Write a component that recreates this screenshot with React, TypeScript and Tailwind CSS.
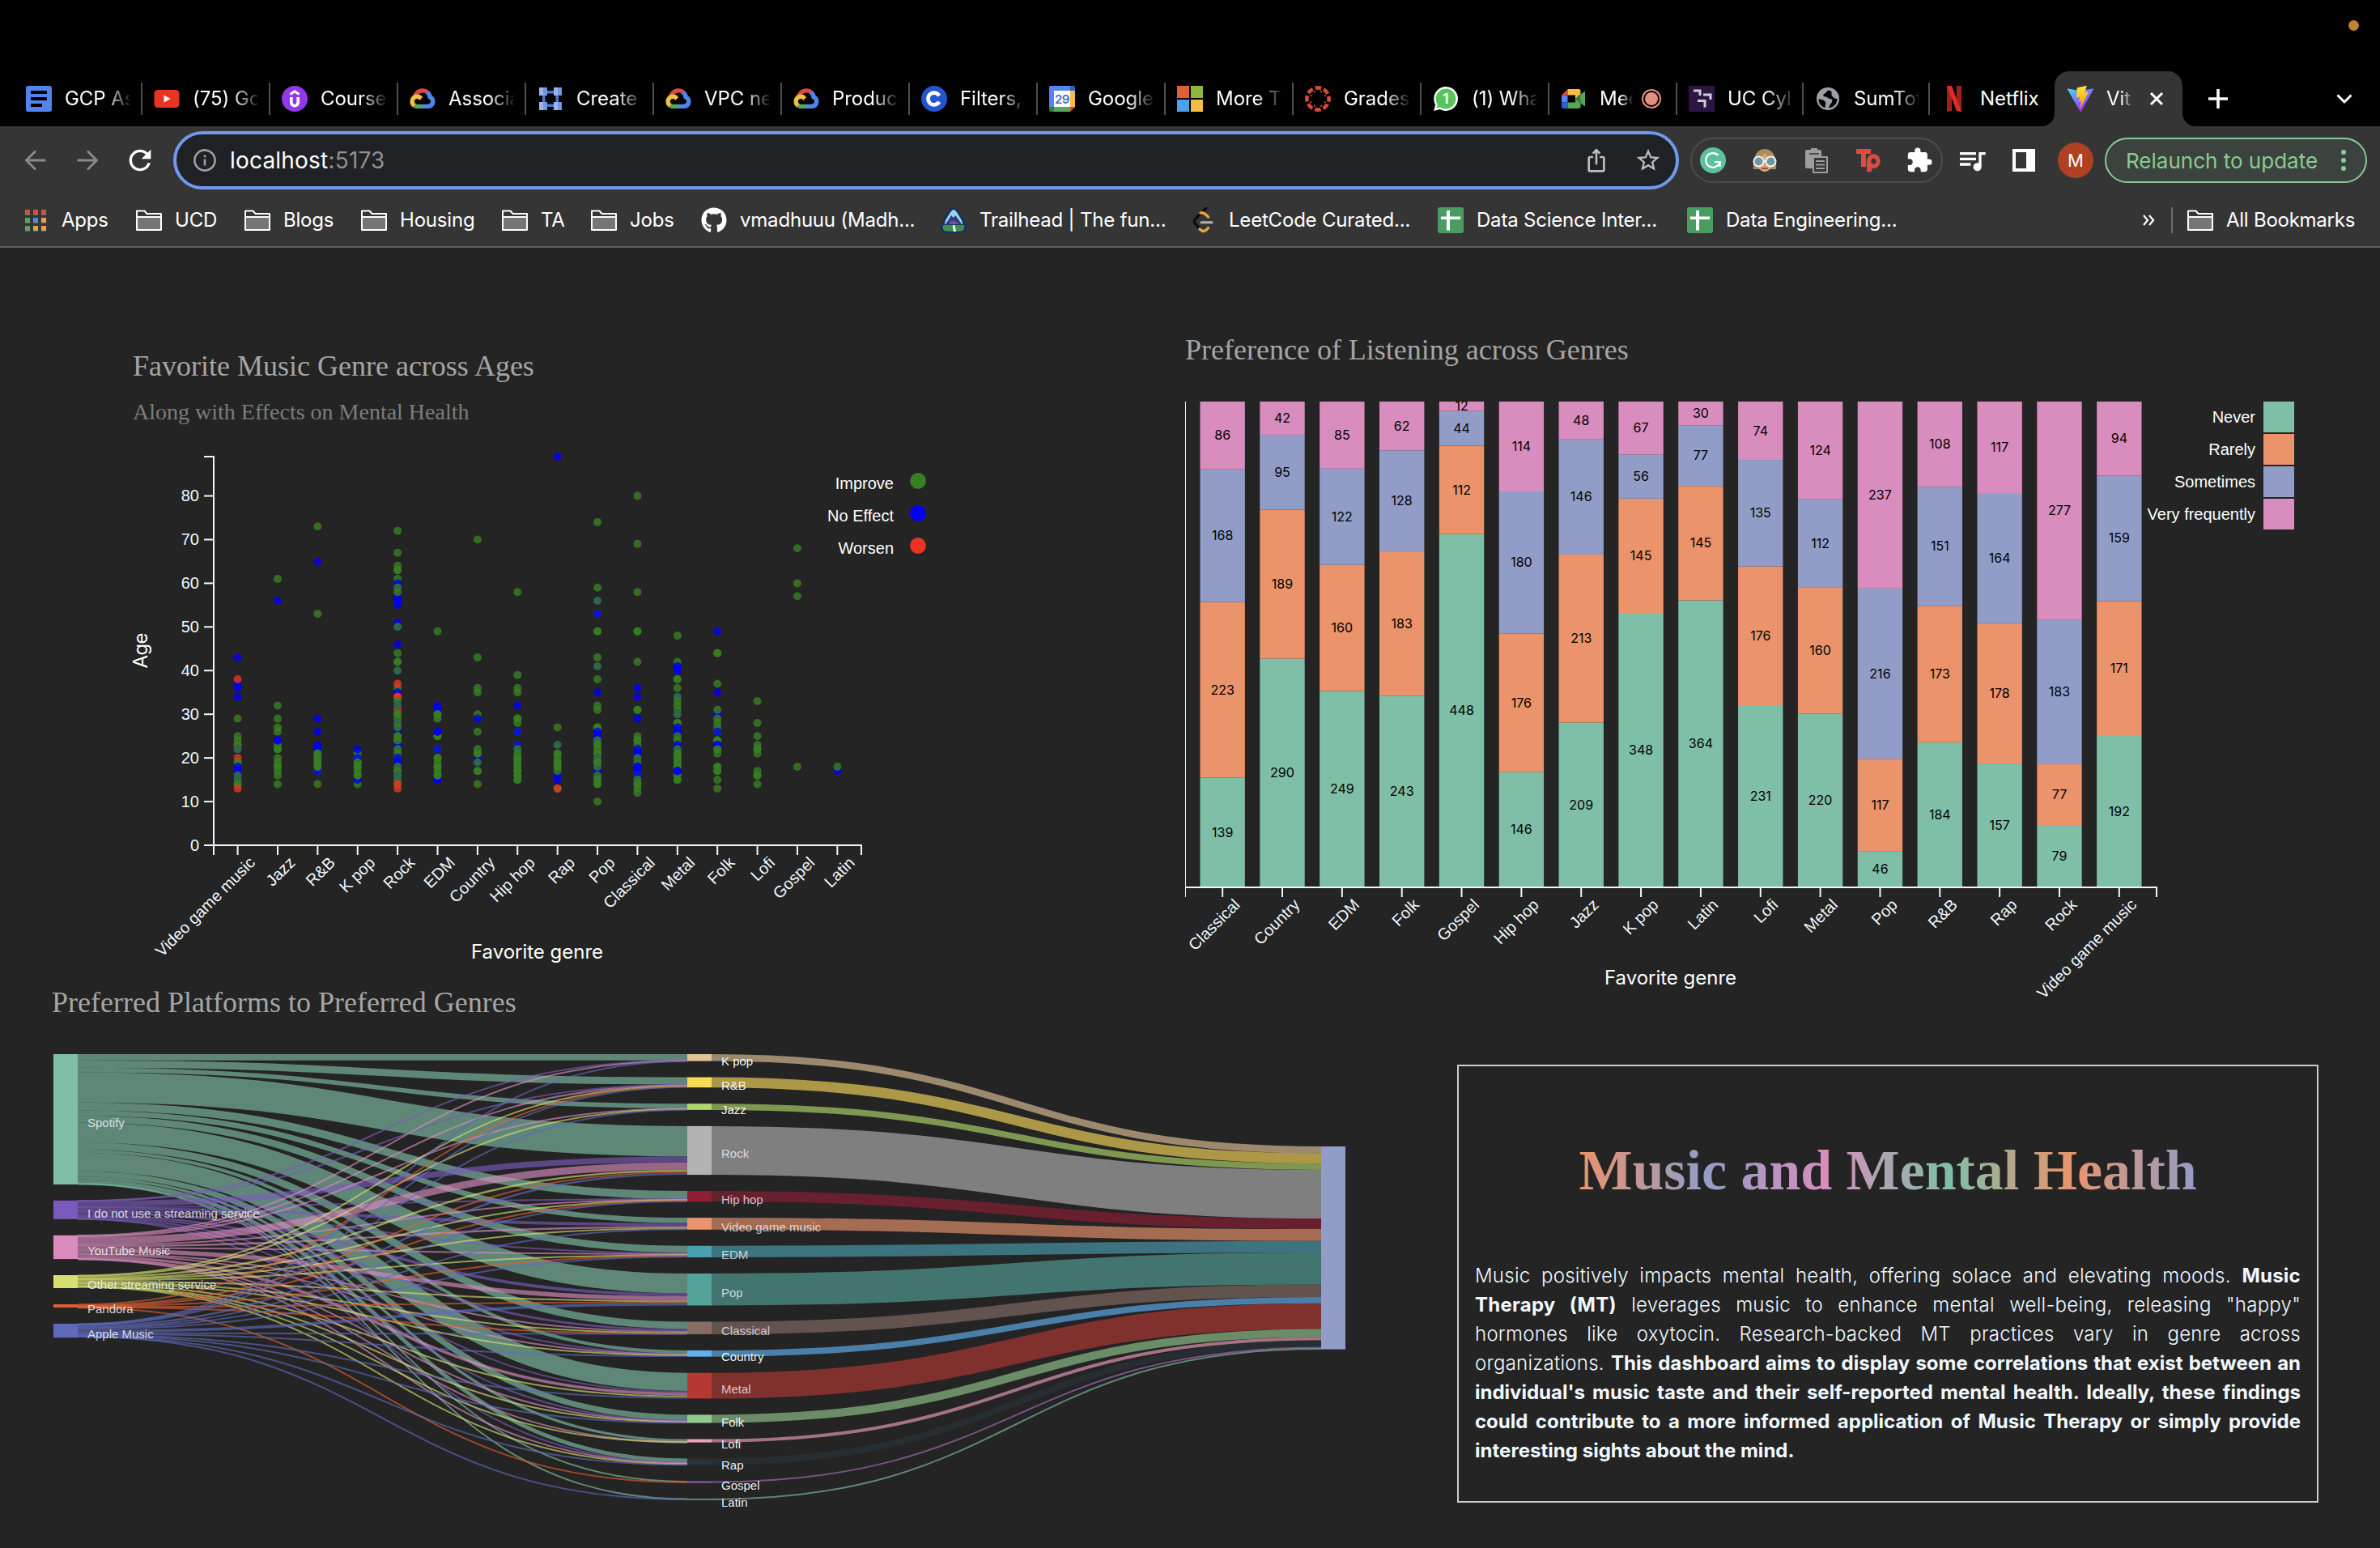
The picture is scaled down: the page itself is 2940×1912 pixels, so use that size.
import React from "react";
import { FaGithub } from "react-icons/fa";
import { MdExtension, MdQueueMusic, MdStarOutline, MdIosShare, MdRefresh } from "react-icons/md";

/* ---------- icons ---------- */

const box = "h-8 w-8 shrink-0";

const DocsIcon = () => (
  <svg className={box} viewBox="0 0 32 32">
    <rect width="32" height="32" rx="3" fill="#5383ec" />
    <path d="M6 6h20v4H6zM6 14h20v4H6zM6 22h14v4H6z" fill="#000" />
  </svg>
);
const YoutubeIcon = () => (
  <svg className={box} viewBox="0 0 32 32">
    <rect x=".5" y="5" width="31" height="22" rx="4.5" fill="#ea3323" />
    <path d="M12.5 11.5v9l8-4.5z" fill="#fff" />
  </svg>
);
const UdemyIcon = () => (
  <svg className={box} viewBox="0 0 32 32">
    <circle cx="16" cy="16" r="16" fill="#9338e8" />
    <path d="M10.500 10.500L16 6.800l5.500 3.700" fill="none" stroke="#fff" strokeWidth="3" />
    <path d="M11.800 14v6.500a4.200 4.200 0 0 0 8.400 0V14" fill="none" stroke="#fff" strokeWidth="3.600" />
  </svg>
);
const GcpIcon = () => (
  <svg className={box} viewBox="-4 -26 264 264">
    <path fill="#dc4c3c" d="M170.252 56.819l22.253-22.253 1.483-9.37C153.437-11.677 88.976-7.496 52.42 33.92 42.267 45.423 34.734 59.764 30.717 74.573l7.97-1.123 44.505-7.34 3.436-3.513c19.797-21.742 53.27-24.667 76.128-6.168l7.496.39z" />
    <path fill="#5383ec" d="M224.205 73.918a100.249 100.249 0 00-30.217-48.722l-31.232 31.232a55.515 55.515 0 0120.379 44.037v5.544c15.35 0 27.797 12.445 27.797 27.796 0 15.352-12.446 27.485-27.797 27.485h-55.671l-5.466 5.934v33.34l5.466 5.231h55.67c39.93.311 72.553-31.494 72.864-71.424a72.303 72.303 0 00-31.793-60.453" />
    <path fill="#58a55c" d="M71.87 205.796h55.593V161.29H71.87a27.275 27.275 0 01-11.4-2.498l-7.887 2.42-22.409 22.253-1.952 7.574c12.567 9.489 27.9 14.825 43.647 14.757" />
    <path fill="#f1bf42" d="M71.87 61.425C31.94 61.664-.237 94.228.001 134.158a72.301 72.301 0 0028.222 56.88l32.248-32.246c-13.99-6.322-20.208-22.786-13.887-36.776 6.32-13.99 22.786-20.208 36.775-13.888a27.796 27.796 0 0113.887 13.888l32.248-32.248A72.224 72.224 0 0071.87 61.425" />
  </svg>
);
const NetworkIcon = () => (
  <svg className={box} viewBox="0 0 32 32">
    <path d="M12 6h8v3.500h-8zM12 22.500h8V26h-8zM6 12h3.500v8H6zM22.500 12H26v8h-3.500z" fill="#4d72d6" />
    <path d="M2 2h5v10H2zM20 2h5v10h-5zM2 20h5v10H2zM20 20h5v10h-5z" fill="#9bb3f0" />
    <path d="M7 2h5v10H7zM25 2h5v10h-5zM7 20h5v10H7zM25 20h5v10h-5z" fill="#7494e6" />
  </svg>
);
const CourseraIcon = () => (
  <svg className={box} viewBox="0 0 32 32">
    <circle cx="16" cy="16" r="16" fill="#2255cf" />
    <path d="M22.200 12.200a7.400 7.400 0 1 0 0 7.600" fill="none" stroke="#fff" strokeWidth="4.600" />
  </svg>
);
const CalendarIcon = () => (
  <svg className={box} viewBox="0 0 32 32">
    <path d="M2 0h24v6H6v20H0V2a2 2 0 0 1 2-2z" fill="#5383ec" />
    <path d="M26 0h4a2 2 0 0 1 2 2v4h-6z" fill="#2f62c9" />
    <path d="M26 6h6v20h-6z" fill="#f1bf42" />
    <path d="M6 26h20v6H6z" fill="#58a55c" />
    <path d="M0 26h6v6H2a2 2 0 0 1-2-2z" fill="#387b3e" />
    <path d="M26 26h6l-6 6z" fill="#dc4c3c" />
    <path d="M6 6h20v20H6z" fill="#fff" />
    <text x="16" y="21.500" textAnchor="middle" fontFamily="Inter, sans-serif" fontWeight="600" fontSize="15" letterSpacing="-.5" fill="#3a6bd6">29</text>
  </svg>
);
const MicrosoftIcon = () => (
  <svg className={box} viewBox="0 0 32 32">
    <path d="M0 0h15v15H0z" fill="#e15f38" />
    <path d="M17 0h15v15H17z" fill="#8bba3a" />
    <path d="M0 17h15v15H0z" fill="#4ba1ea" />
    <path d="M17 17h15v15H17z" fill="#f5bd42" />
  </svg>
);
const CanvasIcon = () => (
  <svg className={box} viewBox="0 0 32 32">
    <circle cx="16" cy="16" r="13.600" fill="none" stroke="#d14e36" strokeWidth="4.600" strokeDasharray="7.480 3.200" strokeDashoffset="3.740" />
    <g fill="#d14e36">
      <circle cx="20" cy="7.200" r="1.100" /><circle cx="12" cy="7.200" r="1.100" />
      <circle cx="20" cy="24.800" r="1.100" /><circle cx="12" cy="24.800" r="1.100" />
      <circle cx="7.200" cy="12" r="1.100" /><circle cx="7.200" cy="20" r="1.100" />
      <circle cx="24.800" cy="12" r="1.100" /><circle cx="24.800" cy="20" r="1.100" />
    </g>
  </svg>
);
const WhatsappIcon = () => (
  <svg className={box} viewBox="0 0 32 32">
    <path d="M16 1a15 15 0 1 1-7.500 28L1 31l2.200-7.500A15 15 0 0 1 16 1z" fill="#fff" />
    <circle cx="16" cy="16" r="12.400" fill="#5ac45c" />
    <path d="M4.500 27.500l1.600-6 4.300 4.400z" fill="#5ac45c" />
    <text x="15.800" y="22" textAnchor="middle" fontFamily="Inter, sans-serif" fontWeight="700" fontSize="17" fill="#fff">1</text>
  </svg>
);
const MeetIcon = () => (
  <svg className={box} viewBox="0 0 32 32">
    <path d="M1 11.500L8.500 4v7.500z" fill="#dc4c3c" />
    <path d="M8.500 4H22a2.500 2.500 0 0 1 2.500 2.500V16L18 18.500V11.500H8.500z" fill="#f1bf42" />
    <path d="M1 11.500h7.500v9H1z" fill="#5383ec" />
    <path d="M1 20.500h7.500V28H3.500A2.500 2.500 0 0 1 1 25.500z" fill="#2f62c9" />
    <path d="M8.500 20.500H18V16l6.500-5v14.500A2.500 2.500 0 0 1 22 28H8.500z" fill="#58a55c" />
    <path d="M18 16l6.500-6.500v13z" fill="#387b3e" />
    <path d="M24.500 10.500L30 6.500v19l-5.500-4z" fill="#58a55c" />
  </svg>
);
const CylanceIcon = () => (
  <svg className={box} viewBox="0 0 32 32">
    <path d="M0 0h32v32H0z" fill="#2a1543" />
    <path d="M6 6h8v6M18 11h9v6M11 18.500h9v8" fill="none" stroke="#cfcfcf" strokeWidth="3" />
  </svg>
);
const GlobeIcon = () => (
  <svg className={box} viewBox="0 0 32 32">
    <circle cx="16" cy="16" r="14" fill="#9aa0a6" />
    <path d="M17 5.500c-3 1-3 3.500-5.500 4.500s-1 3.500 1.500 3.500 3 2.500 6 2.500 3 4 1 5.500-1.500 4-3.500 5.500c6 .5 10.500-4 11-10.500-1-1-3.500-.5-4.500-2s-2.500-1.500-2.500-4 1-4-3.500-5z" fill="#000" />
    <path d="M4.500 16.500c2 0 5 .5 7 2s2 3 1.500 4.500l-.500 4c-5-1.500-8-5.500-8-10.500z" fill="#000" />
  </svg>
);
const NetflixIcon = () => (
  <svg className={box} viewBox="0 0 32 32">
    <path d="M7 0h6v31l-6 1zM19 0h6v32l-6-1z" fill="#a0201c" />
    <path d="M7 0h6l12 32-6-1z" fill="#d92e24" />
  </svg>
);
const ViteIcon = () => (
  <svg className={box} viewBox="0 0 256 257">
    <defs>
      <linearGradient id="va" x1="0" x2=".57" y1=".08" y2=".9"><stop stopColor="#41d1ff" /><stop offset="1" stopColor="#a636fe" /></linearGradient>
      <linearGradient id="vb" x1=".43" x2=".5" y1=".02" y2=".9"><stop stopColor="#ffea83" /><stop offset=".08" stopColor="#ffdd35" /><stop offset="1" stopColor="#ffa800" /></linearGradient>
    </defs>
    <path fill="url(#va)" d="M255.153 37.938L134.897 252.976c-2.483 4.44-8.862 4.466-11.382.048L.875 37.958c-2.746-4.814 1.371-10.646 6.827-9.67l120.385 21.517a6.537 6.537 0 0 0 2.322-.004l117.867-21.483c5.438-.991 9.574 4.796 6.877 9.62Z" />
    <path fill="url(#vb)" d="M185.432.063L96.44 17.501a3.268 3.268 0 0 0-2.634 3.014l-5.474 92.456a3.268 3.268 0 0 0 3.997 3.378l24.777-5.718c2.318-.535 4.413 1.507 3.936 3.838l-7.361 36.047c-.495 2.426 1.782 4.5 4.151 3.78l15.304-4.649c2.372-.72 4.652 1.36 4.15 3.788l-11.698 56.621c-.732 3.542 3.979 5.473 5.943 2.437l1.313-2.028l72.516-144.72c1.215-2.423-.88-5.186-3.54-4.672l-25.505 4.922c-2.396.462-4.435-1.77-3.759-4.114l16.646-57.705c.677-2.35-1.37-4.583-3.769-4.113Z" />
  </svg>
);

const FolderIcon = () => (
  <svg className={box} viewBox="0 0 32 32">
    <path d="M1 28V4.500h9.500l3 3.500H31v20z" fill="#353535" stroke="#fff" strokeWidth="2" strokeLinejoin="round" />
    <path d="M2 13h28v14H2z" fill="#757575" />
    <path d="M2 12h28" stroke="#fff" strokeWidth="2" />
  </svg>
);
const AppsIcon = () => (
  <svg className={box} viewBox="0 0 32 32">
    {["#dc4c3c", "#dc4c3c", "#dc4c3c", "#58a55c", "#5383ec", "#e8a33d", "#58a55c", "#e8a33d", "#e8a33d"].map((c, i) => (
      <g key={i}>
        <rect x={3 + (i % 3) * 10} y={3 + Math.floor(i / 3) * 10} width="6" height="6" fill={c} />
        <rect x={3 + (i % 3) * 10} y={8.500 + Math.floor(i / 3) * 10} width="6" height="1" fill="#8c8c8c" />
      </g>
    ))}
  </svg>
);
const TrailheadIcon = () => (
  <svg className={box} viewBox="0 0 32 32">
    <path d="M16 0c3 0 6 4 9 9s7 12 7 16-3 6-6 6.500-16 .5-20 0S0 29 0 25 4 14 7 9s6-9 9-9z" fill="#16325c" />
    <path d="M16 3c2 0 4 3 7 8s4 7 4 10H5c0-3 1-5 4-10s5-8 7-8z" fill="#9bd4f5" />
    <path d="M6 21l4-6 3-5 3 3 2-3 4 5 4 6z" fill="#2b3d78" />
    <path d="M10 21l2-5 2 2 2-3 3 4 2-1 1 3z" fill="#7c4a9e" />
    <path d="M3 22h26c1 4-1 7-4 7.500s-14 .5-18 0S2 26 3 22z" fill="#3f8f4d" />
    <path d="M15 22h2l1 3 1 5h-3l-1-5z" fill="#fff" />
  </svg>
);
const LeetcodeIcon = () => (
  <svg className={box} viewBox="0 0 32 32">
    <path d="M20 1L7 14c-2 2-2 5 0 7l6 7" fill="none" stroke="#0d0d0d" strokeWidth="3.400" strokeLinecap="round" />
    <path d="M13 7c3-1 6 1 9.500 5M12 27c4 4 7 3 10.500-1.500" fill="none" stroke="#eba340" strokeWidth="3.400" strokeLinecap="round" />
    <path d="M14 18.800h13" stroke="#b3b3b3" strokeWidth="3" strokeLinecap="round" />
  </svg>
);
const SheetsIcon = () => (
  <svg className={box} viewBox="0 0 32 32">
    <rect width="32" height="32" rx="3" fill="#4a9d61" />
    <path d="M11 4h4v7.500h13v3.500H15v13.500h-4V15H4v-3.500h7z" fill="#fff" />
  </svg>
);

/* ---------- browser chrome ---------- */

type Tab = { icon: React.ReactNode; title: string; w?: string; rec?: boolean; full?: boolean };
const tabs: Tab[] = [
  { icon: <DocsIcon />, title: "GCP As" },
  { icon: <YoutubeIcon />, title: "(75) Go" },
  { icon: <UdemyIcon />, title: "Course" },
  { icon: <GcpIcon />, title: "Associa" },
  { icon: <NetworkIcon />, title: "Create" },
  { icon: <GcpIcon />, title: "VPC ne" },
  { icon: <GcpIcon />, title: "Produc" },
  { icon: <CourseraIcon />, title: "Filters," },
  { icon: <CalendarIcon />, title: "Google" },
  { icon: <MicrosoftIcon />, title: "More T" },
  { icon: <CanvasIcon />, title: "Grades" },
  { icon: <WhatsappIcon />, title: "(1) Wha" },
  { icon: <MeetIcon />, title: "Mee", rec: true },
  { icon: <CylanceIcon />, title: "UC Cyl", w: "w-[156px]" },
  { icon: <GlobeIcon />, title: "SumTot", w: "w-[156px]" },
  { icon: <NetflixIcon />, title: "Netflix", w: "w-[156px]", full: true },
];

function TabStrip() {
  return (
    <div className="flex h-[68px] items-center pl-4 text-[24px] leading-8 tracking-[-0.05px] text-white">
      {tabs.map((t, i) => (
        <div key={i} className={`flex h-10 shrink-0 items-center border-l-2 pl-3.5 ${i === 0 ? "border-transparent" : "border-[#4f4f4f]"} ${t.w ?? "w-[158px]"}`}>
          {t.icon}
          <span
            className={`ml-4 overflow-hidden whitespace-nowrap ${t.rec ? "w-[40px]" : "w-[80px]"} ${
              t.full ? "" : "[mask-image:linear-gradient(to_right,#000_62%,transparent_105%)]"
            }`}
          >
            {t.title}
          </span>
          {t.rec && (
            <svg className="ml-3 h-6 w-6 shrink-0" viewBox="0 0 24 24">
              <circle cx="12" cy="12" r="11" fill="none" stroke="#e38f84" strokeWidth="2" />
              <circle cx="12" cy="12" r="8" fill="#e38f84" />
            </svg>
          )}
        </div>
      ))}
      <div className="relative flex h-[68px] w-[158px] shrink-0 items-center rounded-t-[18px] bg-[#353535] pl-4">
        <svg className="absolute bottom-0 left-[-16px] h-4 w-4" viewBox="0 0 16 16"><path d="M16 0v16H0A16 16 0 0 0 16 0z" fill="#353535" /></svg>
        <svg className="absolute bottom-0 right-[-16px] h-4 w-4" viewBox="0 0 16 16"><path d="M0 0v16h16A16 16 0 0 1 0 0z" fill="#353535" /></svg>
        <ViteIcon />
        <span className="ml-4 w-[32px] overflow-hidden whitespace-nowrap [mask-image:linear-gradient(to_right,#000_55%,transparent_110%)]">Vit</span>
        <svg className="ml-5 h-5 w-5" viewBox="0 0 20 20"><path d="M3 3l14 14M17 3L3 17" stroke="#fff" strokeWidth="3" /></svg>
      </div>
      <svg className="ml-8 h-6 w-6" viewBox="0 0 24 24"><path d="M12 1v22M1 12h22" stroke="#fff" strokeWidth="3.600" strokeLinecap="round" /></svg>
      <svg className="ml-[134px] h-5 w-5" viewBox="0 0 20 20"><path d="M1.500 5.500l8.500 8.500 8.500-8.500" fill="none" stroke="#fff" strokeWidth="3" /></svg>
    </div>
  );
}

const slot = "flex h-8 w-16 shrink-0 items-center justify-center";

function Toolbar() {
  return (
    <div className="flex h-[84px] items-center bg-[#353535] pl-3">
      <div className={slot}>
        <svg className="h-7 w-7" viewBox="0 0 28 28"><path d="M26.500 14H3M14 2.500L2.500 14 14 25.500" fill="none" stroke="#8a8a8a" strokeWidth="2.800" /></svg>
      </div>
      <div className={slot}>
        <svg className="h-7 w-7" viewBox="0 0 28 28"><path d="M1.500 14H25M14 2.500L25.500 14 14 25.500" fill="none" stroke="#8a8a8a" strokeWidth="2.800" /></svg>
      </div>
      <div className={slot}><MdRefresh className="ml-[1px] h-10 w-10 text-white" /></div>
      <div className="ml-[10px] flex h-[72px] w-[1860px] shrink-0 items-center rounded-full border-4 border-[#7099ec] bg-[#202124] pl-[21px]">
        <svg className="h-7 w-7" viewBox="0 0 28 28">
          <circle cx="14" cy="14" r="12.600" fill="none" stroke="#9aa0a6" strokeWidth="2.600" />
          <path d="M12.700 12.500h2.600v8h-2.600zM12.700 7.500h2.600v2.800h-2.600z" fill="#9aa0a6" />
        </svg>
        <span className="ml-[17px] text-[28px] leading-9 tracking-[0.2px] text-white">
          localhost<span className="text-[#8f9092]">:5173</span>
        </span>
        <MdIosShare className="ml-auto h-8 w-8 text-[#bdbdbd]" />
        <MdStarOutline className="ml-[31px] mr-[17px] h-[34px] w-[34px] text-[#bdbdbd]" />
      </div>
      <div className="ml-[14px] flex h-14 w-[312px] shrink-0 items-center rounded-full border-2 border-[#4c4c4c] pl-[10px]">
        <svg className={box} viewBox="0 0 32 32">
          <circle cx="16" cy="16" r="16" fill="#5cc19d" />
          <path d="M22.500 10A8.800 8.800 0 1 0 24.500 18H18" fill="none" stroke="#fff" strokeWidth="2.200" />
          <path d="M24.500 17.500v6.500" stroke="#fff" strokeWidth="2.400" />
        </svg>
        <svg className="ml-8 h-8 w-8 shrink-0" viewBox="0 0 32 32">
          <path d="M2 27C1 14 5 2 16 2s15 12 14 25z" fill="#a98d62" />
          <path d="M5 15c4-1 8-4 11-8 3 4 7 7 11 8 0 8-5 15-11 15S5 23 5 15z" fill="#d9a27c" />
          <circle cx="8.500" cy="17.500" r="6" fill="#6d97a3" stroke="#f2f2f2" strokeWidth="2" />
          <circle cx="23.500" cy="17.500" r="6" fill="#6d97a3" stroke="#f2f2f2" strokeWidth="2" />
          <path d="M14 17h4" stroke="#f2f2f2" strokeWidth="2" />
          <path d="M12 26h8" stroke="#a8503c" strokeWidth="2" />
        </svg>
        <svg className="ml-8 h-8 w-8 shrink-0" viewBox="0 0 32 32">
          <path d="M2 5a2 2 0 0 1 2-2h5V1h8v2h3a2 2 0 0 1 2 2v6H11v15H4a2 2 0 0 1-2-2z" fill="#9d9d9d" />
          <path d="M7 8h12" stroke="#353535" strokeWidth="1.500" />
          <path d="M12 12h17v19H12z" fill="#353535" stroke="#9d9d9d" strokeWidth="2" strokeLinejoin="round" />
          <path d="M15 17h11M15 21.500h11M15 26h11" stroke="#9d9d9d" strokeWidth="1.800" />
        </svg>
        <svg className="ml-8 h-8 w-8 shrink-0" viewBox="0 0 32 32">
          <path d="M1 2h18v6h-6v16H7V8H1z" fill="#dd4c41" />
          <path d="M22.500 8a8.500 9 0 1 1-2.500 17.700V30h-6V17a8.500 9 0 0 1 8.500-9zm0 5.500a3.200 3.600 0 1 0 .100 0z" fill="#dd4c41" fillRule="evenodd" />
        </svg>
        <MdExtension className="ml-[30px] h-[34px] w-[34px] shrink-0 text-white" />
      </div>
      <MdQueueMusic className="ml-[16px] h-10 w-10 shrink-0 text-white" />
      <div className="ml-[30px] h-7 w-7 shrink-0 border-4 border-r-[11px] border-white" />
      <div className="ml-[28px] flex h-11 w-11 shrink-0 items-center justify-center rounded-full bg-[#ad4121] text-[22px] text-white">M</div>
      <div className="ml-[14px] flex h-14 w-[324px] shrink-0 items-center rounded-full border-2 border-[#8acb97] bg-[#3c423d] pl-[24px] text-[26px] text-[#8acb97]">
        <span className="whitespace-nowrap">Relaunch to update</span>
        <svg className="ml-auto mr-[24px] h-7 w-[6px]" viewBox="0 0 6 28">
          <circle cx="3" cy="4" r="3" fill="#8acb97" /><circle cx="3" cy="14" r="3" fill="#8acb97" /><circle cx="3" cy="24" r="3" fill="#8acb97" />
        </svg>
      </div>
    </div>
  );
}

const bookmarks: [React.ReactNode, string, string][] = [
  [<AppsIcon />, "Apps", "w-[140px]"],
  [<FolderIcon />, "UCD", "w-[134px]"],
  [<FolderIcon />, "Blogs", "w-[144px]"],
  [<FolderIcon />, "Housing", "w-[174px]"],
  [<FolderIcon />, "TA", "w-[110px]"],
  [<FolderIcon />, "Jobs", "w-[136px]"],
  [<FaGithub className="h-8 w-8 shrink-0 text-white" />, "vmadhuuu (Madh...", "w-[296px]"],
  [<TrailheadIcon />, "Trailhead | The fun...", "w-[308px]"],
  [<LeetcodeIcon />, "LeetCode Curated...", "w-[306px]"],
  [<SheetsIcon />, "Data Science Inter...", "w-[308px]"],
  [<SheetsIcon />, "Data Engineering...", "w-[300px]"],
];

function BookmarksBar() {
  return (
    <div className="flex h-[66px] items-center border-b-2 border-[#5f5f5f] bg-[#353535] pl-7 text-[24px] leading-8 text-white">
      {bookmarks.map(([icon, label, w], i) => (
        <div key={i} className={`flex shrink-0 items-center gap-4 whitespace-nowrap ${w}`}>
          {icon}
          <span className="tracking-[-0.2px]">{label}</span>
        </div>
      ))}
      <svg className="ml-[262px] h-4 w-4 shrink-0" viewBox="0 0 16 16"><path d="M2 2l5 6-5 6M9 2l5 6-5 6" fill="none" stroke="#fff" strokeWidth="2.200" /></svg>
      <div className="ml-[20px] h-8 w-[2px] shrink-0 bg-[#6b6b6b]" />
      <div className="ml-[18px] flex items-center gap-4 whitespace-nowrap">
        <FolderIcon />
        <span className="tracking-[-0.25px]">All Bookmarks</span>
      </div>
    </div>
  );
}

/* ---------- scatter plot ---------- */

const AX = "#f0f8ff";
const HELV = '"Liberation Sans", Arial, sans-serif';
const GREEN = "#378022";
const BLUE = "#0000f5";
const RED = "#eb3323";

const scatter: [string, string][] = [
  ["Video game music", "b43 b37 r38 b36 b34 g29 g25 r23 g24 g23 b22 g22 g19 r20 g19 b17 b18 b15 g15 b16 g16 g14 g14 r13"],
  ["Jazz", "g61 b56 g32 g29 g27 g26 g23 b24 b24 g22 g22 g20 g19 g18 g18 g17 g16 g14"],
  ["R&B", "g73 b65 g53 b29 b26 b23 b22 g21 g21 g20 g20 g19 g19 b17 g17 b17 g18 g18 g14"],
  ["K pop", "g21 b22 g19 g20 b20 g19 g18 g18 g17 g14 b15 g16 g16"],
  ["Rock", "g72 g67 g64 g63 g63 g61 b60 b57 b59 g59 g58 b56 b56 b55 b51 b50 g50 b46 g44 g42 g42 b40 g40 g36 r37 b35 r34 r34 g33 r31 b32 g32 g30 g29 b28 g28 b26 g27 g30 g25 g24 b23 g25 g21 g22 g24 b20 g20 b19 b20 g16 g17 b18 g18 g17 g15 b16 g16 r13 g14 r14"],
  ["EDM", "g49 b31 b32 b31 g29 g30 g30 g25 g25 b26 b26 g22 b22 g20 g20 g19 g18 g18 g17 b15 b15 g16 g16"],
  ["Country", "g70 g43 g36 g35 g30 b29 g26 g22 b20 g21 g21 b19 g19 g17 g17 g14"],
  ["Hip hop", "g58 g39 g36 g35 b32 g28 g29 g29 g26 b26 b22 g23 b23 g22 g21 g20 g20 g19 g19 g18 g18 g17 g17 g16 g16 g15 g15"],
  ["Rap", "b89 g27 b23 g23 g21 g21 g20 g19 g19 b16 b15 g17 g18 g18 g13 r13"],
  ["Pop", "g74 g59 b56 g56 g53 b53 g49 g49 g43 b41 g41 g38 b35 g32 g31 b26 g27 g27 b26 b25 g24 b24 g24 g23 g23 g22 r21 g21 g21 b20 g20 g19 b18 b17 g19 g18 b16 g16 g15 g15 g14 g14 g10"],
  ["Classical", "g80 g69 g58 g49 g49 g42 b36 b34 g31 g31 b29 g25 g24 g23 g24 b22 b21 b21 g20 b19 g19 b18 b18 b17 g16 b16 g15 g12 g13 g14 g14"],
  ["Metal", "g48 b41 g42 b41 b40 b40 g38 g38 g36 b34 g34 g33 g32 g31 b30 g30 g28 g28 b27 b26 b26 g25 g24 b23 b22 g22 g21 g21 g20 g20 g19 g19 g18 g18 g16 b17 b17 g15 g15"],
  ["Folk", "b49 g44 g44 g37 b35 b30 g31 g29 g28 g27 g26 b26 g24 g24 b23 g22 b23 g21 g22 g18 g18 g17 g17 g15 g13"],
  ["Lofi", "g33 g28 g25 g23 g22 g22 g21 g17 g16 g16 g14"],
  ["Gospel", "g68 g60 g57 g18"],
  ["Latin", "b17 g18"],
];

function TickLabel({ x, y, children }: { x: number; y: number; children: React.ReactNode }) {
  return (
    <text transform={`translate(${x},${y}) rotate(-45)`} x="0" y="32.200" textAnchor="end" fontFamily={HELV} fontSize="20" fill={AX}>
      {children}
    </text>
  );
}

function ScatterPlot() {
  const y = (v: number) => 1044 - (v * 480) / 89;
  const x = (i: number) => 293.600 + i * 49.383;
  return (
    <svg className="ml-[140px] mt-[15px] h-[660px] w-[1060px]" viewBox="140 540 1060 660">
      <path d="M252 564H264V1044H252" fill="none" stroke={AX} strokeWidth="2" />
      <path d="M264 1056V1044H1064V1056" fill="none" stroke={AX} strokeWidth="2" />
      {[0, 10, 20, 30, 40, 50, 60, 70, 80].map((v) => (
        <g key={v}>
          <path d={`M252 ${y(v)}H264`} stroke={AX} strokeWidth="2" />
          <text x="246" y={y(v) + 6.600} textAnchor="end" fontFamily={HELV} fontSize="20" fill={AX}>{v}</text>
        </g>
      ))}
      {scatter.map(([g, pts], i) => (
        <g key={g}>
          <path d={`M${x(i)} 1044V1056`} stroke={AX} strokeWidth="2" />
          <TickLabel x={x(i)} y={1044}>{g}</TickLabel>
          {pts.split(" ").map((p, k) => (
            <circle key={k} cx={x(i)} cy={y(+p.slice(1))} r="5" opacity=".8" fill={p[0] === "g" ? GREEN : p[0] === "b" ? BLUE : RED} />
          ))}
        </g>
      ))}
      <text transform="translate(182,825.500) rotate(-90)" fontFamily="Inter, sans-serif" fontSize="24" fill="#fff" textLength="44">Age</text>
      <text x="582" y="1184" fontFamily="Inter, sans-serif" fontSize="24" fill="#fff" textLength="163">Favorite genre</text>
      {([["Improve", GREEN], ["No Effect", BLUE], ["Worsen", RED]] as const).map(([t, c], i) => (
        <g key={t}>
          <text x="1104" y={604 + i * 40} textAnchor="end" fontFamily={HELV} fontSize="20" fill="#fff">{t}</text>
          <circle cx="1134" cy={594 + i * 40} r="10" fill={c} />
        </g>
      ))}
    </svg>
  );
}

/* ---------- stacked bars ---------- */

const bars: [string, number[]][] = [
  ["Classical", [139, 223, 168, 86]],
  ["Country", [290, 189, 95, 42]],
  ["EDM", [249, 160, 122, 85]],
  ["Folk", [243, 183, 128, 62]],
  ["Gospel", [448, 112, 44, 12]],
  ["Hip hop", [146, 176, 180, 114]],
  ["Jazz", [209, 213, 146, 48]],
  ["K pop", [348, 145, 56, 67]],
  ["Latin", [364, 145, 77, 30]],
  ["Lofi", [231, 176, 135, 74]],
  ["Metal", [220, 160, 112, 124]],
  ["Pop", [46, 117, 216, 237]],
  ["R&B", [184, 173, 151, 108]],
  ["Rap", [157, 178, 164, 117]],
  ["Rock", [79, 77, 183, 277]],
  ["Video game music", [192, 171, 159, 94]],
];
const SET2 = ["#7fbfa7", "#eb936b", "#929dc7", "#d88dbe"];

function StackedBars() {
  const step = 1200 / 16.25;
  const bw = step * 0.75;
  return (
    <svg className="mt-2 h-[800px] w-[1400px]" viewBox="1464 460 1400 800">
      {bars.map(([g, vals], i) => {
        const x = 1464 + step * 0.25 + i * step;
        let acc = 0;
        return (
          <g key={g}>
            {vals.map((v, k) => {
              const h = (v * 600) / 616;
              const top = 1096 - acc - h;
              acc += h;
              return (
                <g key={k}>
                  <rect x={x} y={top} width={bw} height={h} fill={SET2[k]} />
                  <text x={x + bw / 2} y={top + h / 2 + 5.500} textAnchor="middle" fontFamily="Inter, sans-serif" fontSize="16" fill="#000">{v}</text>
                </g>
              );
            })}
            <path d={`M${x + bw / 2} 1096V1108`} stroke={AX} strokeWidth="2" />
            <TickLabel x={x + bw / 2} y={1096}>{g}</TickLabel>
          </g>
        );
      })}
      <path d="M1464 496V1108" stroke={AX} strokeWidth="2" />
      <path d="M1464 1096H2664V1108" fill="none" stroke={AX} strokeWidth="2" />
      <text x="1982" y="1216" fontFamily="Inter, sans-serif" fontSize="24" fill="#fff" textLength="163">Favorite genre</text>
      {["Never", "Rarely", "Sometimes", "Very frequently"].map((t, i) => (
        <g key={t}>
          <text x="2786" y={522 + i * 40} textAnchor="end" fontFamily={HELV} fontSize="20" fill="#fff">{t}</text>
          <rect x="2796" y={496 + i * 40} width="38" height="38" fill={SET2[i]} />
        </g>
      ))}
    </svg>
  );
}

/* ---------- sankey ---------- */

const K = 250.6 / 616;
const platforms: [string, string, number, number][] = [
  ["Spotify", "#7fbfa6", 1302, 161],
  ["I do not use a streaming service.", "#7a5aba", 1482.800, 23],
  ["YouTube Music", "#d98cbd", 1525.800, 29.300],
  ["Other streaming service", "#d7df6e", 1575, 16],
  ["Pandora", "#e0602f", 1611, 4],
  ["Apple Music", "#606abb", 1635, 17.200],
];
/* name, colour, total, listeners per platform */
const genres: [string, string, number, number[]][] = [
  ["K pop", "#e2c497", 21, [19, 1, 1, 0, 0, 1]],
  ["R&B", "#f8da59", 31, [22, 1, 3, 2, 1, 2]],
  ["Jazz", "#b1d86a", 19, [14, 0, 2, 2, 0, 1]],
  ["Rock", "#b3b3b3", 148, [92, 18, 22, 6, 4, 6]],
  ["Hip hop", "#8f1d34", 32, [24, 1, 2, 2, 1, 2]],
  ["Video game music", "#ed946e", 36, [16, 9, 6, 2, 0, 3]],
  ["EDM", "#4a9fb0", 35, [21, 2, 4, 3, 1, 4]],
  ["Pop", "#54a39b", 97, [60, 9, 13, 4, 2, 9]],
  ["Classical", "#876d65", 38, [22, 7, 4, 3, 1, 1]],
  ["Country", "#5eb2f3", 19, [10, 1, 3, 2, 0, 3]],
  ["Metal", "#b53832", 78, [55, 5, 9, 5, 0, 4]],
  ["Folk", "#92c98e", 25, [17, 2, 2, 3, 0, 1]],
  ["Lofi", "#ef9fbe", 10, [8, 0, 1, 1, 0, 0]],
  ["Rap", "#283238", 20, [12, 1, 2, 3, 0, 2]],
  ["Gospel", "#ab6abf", 4, [2, 0, 0, 0, 1, 0]],
  ["Latin", "#7fbfa6", 3, [1, 0, 0, 0, 0, 1]],
];

const ribbon = (x0: number, y0: number, x1: number, y1: number) => {
  const m = (x0 + x1) / 2;
  return `M${x0} ${y0}C${m} ${y0} ${m} ${y1} ${x1} ${y1}`;
};

function Sankey() {
  const tops: number[] = [];
  let t = 1302;
  genres.forEach((g) => {
    tops.push(t);
    t += g[2] * K + 20;
  });
  const srcOff = platforms.map((p) => p[2]);
  const inFlow: { d: string; c: string; w: number; s: number }[] = [];
  const outFlow: { d: string; c: string; w: number }[] = [];
  let right = 1416;
  genres.forEach((g, gi) => {
    let ty = tops[gi];
    g[3].forEach((v, si) => {
      if (!v) return;
      const w = v * K;
      inFlow.push({ d: ribbon(96, srcOff[si] + w / 2, 849, ty + w / 2), c: platforms[si][1], w: Math.max(2, w), s: si });
      srcOff[si] += w;
      ty += w;
    });
    const h = g[2] * K;
    outFlow.push({ d: ribbon(879, tops[gi] + h / 2, 1632, right + h / 2), c: g[1], w: Math.max(2, h) });
    right += h;
  });
  inFlow.sort((a, b) => a.s - b.s);
  return (
    <svg className="ml-[50px] mt-[22px] h-[600px] w-[1640px]" viewBox="50 1280 1640 600">
      {platforms.map(([n, c, y, h]) => (
        <rect key={n} x="66" y={y} width="30" height={h} fill={c} />
      ))}
      {genres.map(([n, c, v], i) => (
        <rect key={n} x="849" y={tops[i]} width="30" height={v * K} fill={c} />
      ))}
      <rect x="1632" y="1416" width="30" height="250.600" fill="#919dc7" />
      <g fill="none" strokeOpacity=".64">
        {inFlow.map((l, i) => <path key={i} d={l.d} stroke={l.c} strokeWidth={l.w} />)}
        {outFlow.map((l, i) => <path key={i} d={l.d} stroke={l.c} strokeWidth={l.w} />)}
      </g>
      <g fontFamily={HELV} fontSize="15" fill="#fff" fillOpacity=".78">
        {platforms.map(([n, , y, h]) => (
          <text key={n} x="108" y={y + h / 2 + 9.300}>{n}</text>
        ))}
        {genres.map(([n, , v], i) => (
          <text key={n} x="891" y={tops[i] + (v * K) / 2 + 9.300} fillOpacity={v < 33 && v !== 32 ? 0.95 : 0.72}>{n}</text>
        ))}
      </g>
    </svg>
  );
}

/* ---------- page ---------- */

const B = ({ children }: { children: React.ReactNode }) => <b className="font-bold">{children}</b>;
const lines: React.ReactNode[] = [
  <>Music positively impacts mental health, offering solace and elevating moods. <B>Music</B></>,
  <><B>Therapy (MT)</B> leverages music to enhance mental well-being, releasing "happy"</>,
  <>hormones like oxytocin. Research-backed MT practices vary in genre across</>,
  <>organizations. <B>This dashboard aims to display some correlations that exist between an</B></>,
  <B>individual's music taste and their self-reported mental health. Ideally, these findings</B>,
  <B>could contribute to a more informed application of Music Therapy or simply provide</B>,
];

const heading = 'whitespace-nowrap font-["Liberation_Serif",serif] text-[36px] leading-10 text-[#a5a5a5]';

export default function App() {
  return (
    <div className='h-[1912px] w-[2940px] overflow-hidden bg-[#242424] font-["Inter",sans-serif]'>
      <header>
        <div className="bg-black">
          <div className="flex h-[88px] items-start justify-end pr-[26px] pt-[25px]">
            <div className="h-[13px] w-[13px] rounded-full bg-[#c18332]" />
          </div>
          <TabStrip />
        </div>
        <Toolbar />
        <BookmarksBar />
      </header>
      <main className="flex">
        <section className="w-[1464px] shrink-0">
          <h2 className={`ml-[164px] mt-[126px] ${heading}`}>Favorite Music Genre across Ages</h2>
          <h3 className='ml-[164px] mt-[21px] whitespace-nowrap font-["Liberation_Serif",serif] text-[28px] leading-8 text-[#7c7c7c]'>
            Along with Effects on Mental Health
          </h3>
          <ScatterPlot />
          <h2 className={`ml-[64px] mt-[18px] ${heading}`}>Preferred Platforms to Preferred Genres</h2>
          <Sankey />
        </section>
        <section className="w-[1476px] shrink-0">
          <h2 className={`mt-[106px] ${heading}`}>Preference of Listening across Genres</h2>
          <StackedBars />
          <article className="ml-[336px] mt-[55px] h-[541px] w-[1064px] border-2 border-[#c9cdcd] px-5 text-[#f0f8ff]">
            <div className="flex justify-center">
              <h1 className='mt-[89px] whitespace-nowrap bg-[linear-gradient(to_right,#eb936b,#929dc7,#d88dbe,#7fbfa7,#eb936b,#929dc7)] bg-clip-text font-["Liberation_Serif",serif] text-[70px] font-bold leading-[80px] tracking-[-0.04px] text-transparent'>
                Music and Mental Health
              </h1>
            </div>
            <div className="mt-[72px] text-[24px] font-light leading-9">
              {lines.map((l, i) => (
                <p key={i} className={`whitespace-nowrap [text-align-last:justify] ${i < 3 ? "tracking-[0.25px]" : ""}`}>
                  {i === 3 ? <><span className="tracking-[0.25px]">organizations.</span>{" "}<B>This dashboard aims to display some correlations that exist between an</B></> : l}
                </p>
              ))}
              <p className="tracking-[0.03px]"><B>interesting sights about the mind.</B></p>
            </div>
          </article>
        </section>
      </main>
    </div>
  );
}
